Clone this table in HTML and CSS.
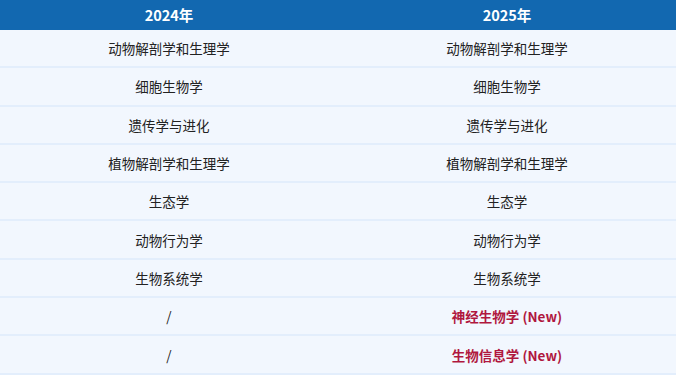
FILE: index.html
```html
<!DOCTYPE html>
<html lang="zh">
<head>
<meta charset="utf-8">
<link rel="stylesheet" href="styles.css">
</head>
<body>
<table class="cmp">
  <thead>
    <tr><th>2024年</th><th>2025年</th></tr>
  </thead>
  <tbody>
    <tr><td>动物解剖学和生理学</td><td>动物解剖学和生理学</td></tr>
    <tr><td>细胞生物学</td><td>细胞生物学</td></tr>
    <tr><td>遗传学与进化</td><td>遗传学与进化</td></tr>
    <tr><td>植物解剖学和生理学</td><td>植物解剖学和生理学</td></tr>
    <tr><td>生态学</td><td>生态学</td></tr>
    <tr><td>动物行为学</td><td>动物行为学</td></tr>
    <tr><td>生物系统学</td><td>生物系统学</td></tr>
    <tr><td>/</td><td class="new">神经生物学 (New)</td></tr>
    <tr><td>/</td><td class="new">生物信息学 (New)</td></tr>
  </tbody>
</table>
</body>
</html>
```
FILE: styles.css
```css
html, body {
  margin: 0;
  padding: 0;
  background: #ffffff;
}
.cmp {
  width: 676px;
  border-collapse: collapse;
  table-layout: fixed;
  font-family: "Noto Sans CJK SC", "Noto Sans", sans-serif;
}
.cmp th {
  background: #1268b0;
  color: #ffffff;
  font-size: 14.5px;
  font-weight: 700;
  height: 30px;
  padding: 0;
  text-align: center;
  line-height: 30px;
}
.cmp td {
  background: #f2f7fe;
  color: #222222;
  font-size: 13.5px;
  text-align: center;
  height: 36.3px;
  padding: 0;
  border-bottom: 2px solid #e3eefc;
}
.cmp td.new {
  color: #b0173e;
  font-weight: 700;
}
```
